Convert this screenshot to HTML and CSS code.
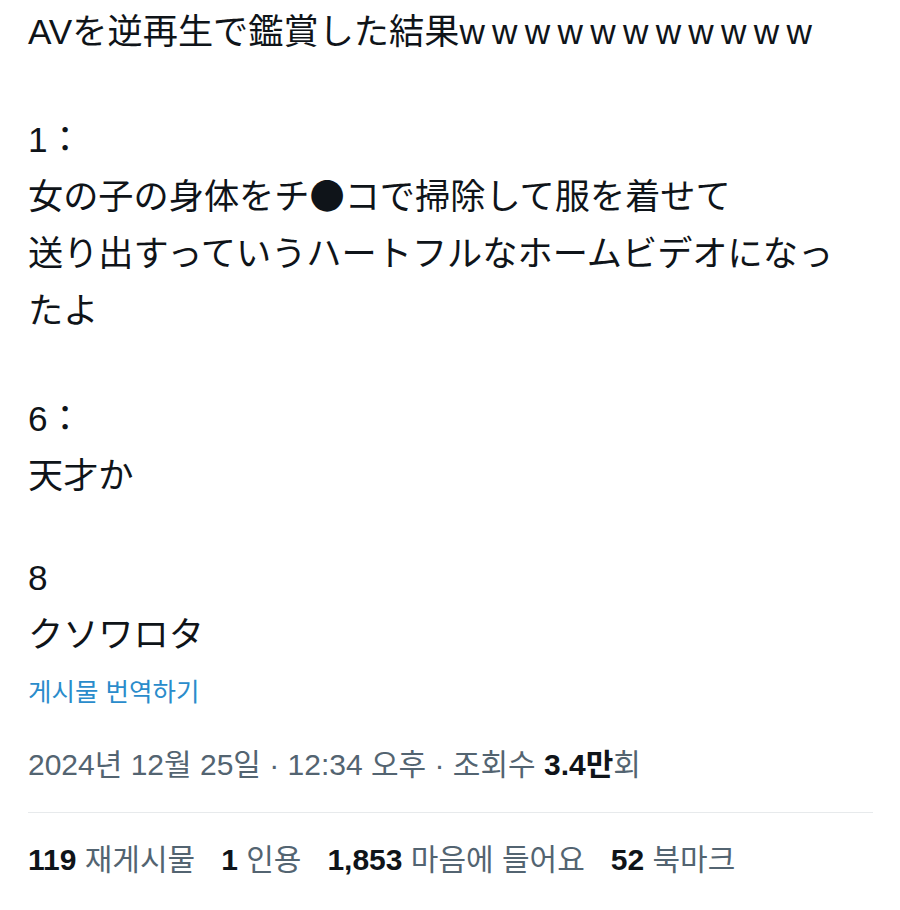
FILE: index.html
```html
<!DOCTYPE html>
<html lang="ja">
<head>
<meta charset="utf-8">
<title>post</title>
<link rel="stylesheet" href="styles.css">
</head>
<body>
<article class="post">
  <div class="post-text">
    <p class="para para-title"><span class="lat">AV</span>を逆再生で鑑賞した結果<span class="lat ws">wwwwwwwwwww</span></p>
    <p class="para para-1"><span class="lat">1</span>：<br>女の子の身体をチ●コで掃除して服を着せて<br>送り出すっていうハートフルなホームビデオになっ<br>たよ</p>
    <p class="para para-6"><span class="lat">6</span>：<br>天才か</p>
    <p class="para para-8"><span class="lat">8</span><br>クソワロタ</p>
  </div>
  <div class="translate" lang="ko">게시물 번역하기</div>
  <div class="meta" lang="ko">2024년 12월 25일 · 12:34 오후 · 조회수 <b class="num">3.4만</b>회</div>
  <div class="divider"></div>
  <div class="stats" lang="ko">
    <span class="stat"><b class="num">119</b> 재게시물</span>
    <span class="stat"><b class="num">1</b> 인용</span>
    <span class="stat"><b class="num">1,853</b> 마음에 들어요</span>
    <span class="stat"><b class="num">52</b> 북마크</span>
  </div>
  <div class="divider"></div>
</article>
</body>
</html>
```
FILE: styles.css
```css
html, body {
  margin: 0;
  padding: 0;
  background: #ffffff;
}
body {
  font-family: "Noto Sans CJK JP", "Noto Sans CJK KR", sans-serif;
  color: #0f1419;
}
.post {
  padding: 0 27px 0 28px;
}
.post-text {
  display: flex;
  flex-direction: column;
}
.para {
  margin: 0;
  font-size: 35.2px;
  line-height: 57px;
  white-space: nowrap;
}
.para-1 {
  margin-top: 51px;
}
.para-6 {
  margin-top: 51px;
}
.para-8 {
  margin-top: 45px;
}
.lat {
  font-family: "Liberation Sans", "Noto Sans CJK JP", sans-serif;
  line-height: 1;
}
.ws {
  letter-spacing: 7.3px;
}
.translate {
  margin-top: 13px;
  font-family: "Noto Sans CJK KR", sans-serif;
  font-size: 25.5px;
  line-height: 34px;
  color: #2a8ccb;
}
.meta {
  margin-top: 41px;
  font-family: "Liberation Sans", "Noto Sans CJK KR", sans-serif;
  font-size: 30px;
  line-height: 34px;
  color: #536471;
}
.num {
  font-weight: 700;
  color: #0f1419;
  line-height: 1;
}
.divider {
  height: 1px;
  background: #e7eaec;
}
.meta + .divider {
  margin-top: 30px;
}
.stats {
  display: flex;
  gap: 26px;
  margin: 30px 0 33px;
  font-family: "Liberation Sans", "Noto Sans CJK KR", sans-serif;
  font-size: 30px;
  line-height: 34px;
  color: #536471;
}
```
